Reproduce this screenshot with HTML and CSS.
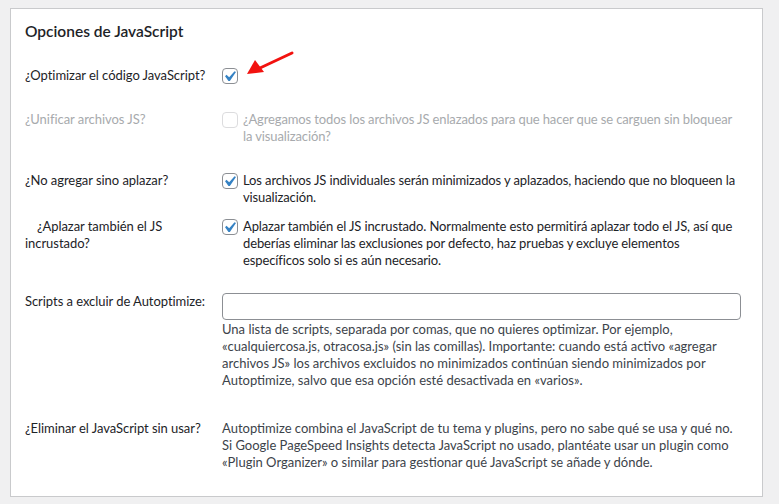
FILE: index.html
```html
<!DOCTYPE html>
<html lang="es">
<head>
<meta charset="utf-8">
<title>Opciones de JavaScript</title>
<link rel="stylesheet" href="styles.css">
</head>
<body>
<div class="card">
  <h2 class="title">Opciones de JavaScript</h2>

  <div class="row row-1">
    <div class="label">¿Optimizar el código JavaScript?</div>
    <div class="control option">
      <span class="check checked"><svg viewBox="0 0 20 20" width="21" height="21"><path d="M14.83 4.89l1.34.94-5.81 8.38H9.02L5.78 9.67l1.34-1.25 2.57 2.4z"/></svg></span>
    </div>
  </div>

  <div class="row row-2 disabled">
    <div class="label">¿Unificar archivos JS?</div>
    <div class="control option">
      <span class="check"></span>
      <span class="text">¿Agregamos todos los archivos JS enlazados para que hacer que se carguen sin bloquear la visualización?</span>
    </div>
  </div>

  <div class="row row-3">
    <div class="label">¿No agregar sino aplazar?</div>
    <div class="control option">
      <span class="check checked"><svg viewBox="0 0 20 20" width="21" height="21"><path d="M14.83 4.89l1.34.94-5.81 8.38H9.02L5.78 9.67l1.34-1.25 2.57 2.4z"/></svg></span>
      <span class="text">Los archivos JS individuales serán minimizados y aplazados, haciendo que no bloqueen la visualización.</span>
    </div>
  </div>

  <div class="row row-4">
    <div class="label indent">¿Aplazar también el JS incrustado?</div>
    <div class="control option">
      <span class="check checked"><svg viewBox="0 0 20 20" width="21" height="21"><path d="M14.83 4.89l1.34.94-5.81 8.38H9.02L5.78 9.67l1.34-1.25 2.57 2.4z"/></svg></span>
      <span class="text">Aplazar también el JS incrustado. Normalmente esto permitirá aplazar todo el JS, así que deberías eliminar las exclusiones por defecto, haz pruebas y excluye elementos específicos solo si es aún necesario.</span>
    </div>
  </div>

  <div class="row row-5">
    <div class="label">Scripts a excluir de Autoptimize:</div>
    <div class="control">
      <input class="field" type="text" value="">
      <p class="desc">Una lista de scripts, separada por comas, que no quieres optimizar. Por ejemplo, «cualquiercosa.js, otracosa.js» (sin las comillas). Importante: cuando está activo «agregar archivos JS» los archivos excluidos no minimizados continúan siendo minimizados por Autoptimize, salvo que esa opción esté desactivada en «varios».</p>
    </div>
  </div>

  <div class="row row-6">
    <div class="label">¿Eliminar el JavaScript sin usar?</div>
    <div class="control">
      <p class="desc">Autoptimize combina el JavaScript de tu tema y plugins, pero no sabe qué se usa y qué no. Si Google PageSpeed Insights detecta JavaScript no usado, plantéate usar un plugin como «Plugin Organizer» o similar para gestionar qué JavaScript se añade y dónde.</p>
    </div>
  </div>

  <svg class="arrow" width="60" height="40" viewBox="0 0 60 40">
    <line x1="52" y1="5" x2="20" y2="20" stroke="#f2120f" stroke-width="3" stroke-linecap="round"/>
    <polygon points="7,26 15,12 24,24" fill="#f2120f"/>
  </svg>
</div>
</body>
</html>
```

FILE: styles.css
```css
html, body {
  margin: 0;
  padding: 0;
}

body {
  background: #f0f0f1;
  font-family: "Lato", "Liberation Sans", sans-serif;
  font-size: 13px;
  line-height: 17px;
  color: #1d2327;
  padding: 8px 0 0 10px;
}

.card {
  position: relative;
  box-sizing: border-box;
  width: 753px;
  height: 489px;
  background: #fff;
  border: 1px solid #c9cacc;
  padding: 12px 20px 0 14px;
}

.title {
  margin: 0;
  font-size: 15.5px;
  line-height: 20px;
  font-weight: 600;
  color: #1d2327;
}

.row {
  display: grid;
  grid-template-columns: 197px 519px;
}

.label {
  padding-right: 10px;
  letter-spacing: -0.05px;
}

.label.indent {
  text-indent: 12px;
}

.row-1 { margin-top: 26px; }
.row-2 { margin-top: 27px; }
.row-3 { margin-top: 27px; }
.row-4 { margin-top: 12px; }
.row-5 { margin-top: 24px; }
.row-6 { margin-top: 31px; }

.option {
  display: flex;
  align-items: flex-start;
  gap: 5px;
}

.text {
  flex: 1;
  letter-spacing: -0.12px;
}

.check {
  display: block;
  position: relative;
  flex: none;
  box-sizing: border-box;
  width: 16px;
  height: 16px;
  margin-top: 1px;
  border: 1px solid #8c8f94;
  border-radius: 4px;
  background: #fff;
}

.check svg {
  position: absolute;
  left: -4px;
  top: -3px;
  fill: #3582c4;
}

.disabled {
  color: #a7aaad;
}

.disabled .check {
  border-color: #dcdcde;
  background: #fff;
}

.field {
  display: block;
  box-sizing: border-box;
  width: 519px;
  height: 27px;
  margin: 0;
  border: 1px solid #8c8f94;
  border-radius: 4px;
  background: #fff;
}

.desc {
  margin: 1px 0 0;
  color: #3c434a;
}

.row-6 .desc {
  margin: 0;
}

.arrow {
  position: absolute;
  left: 229px;
  top: 39px;
}
```
